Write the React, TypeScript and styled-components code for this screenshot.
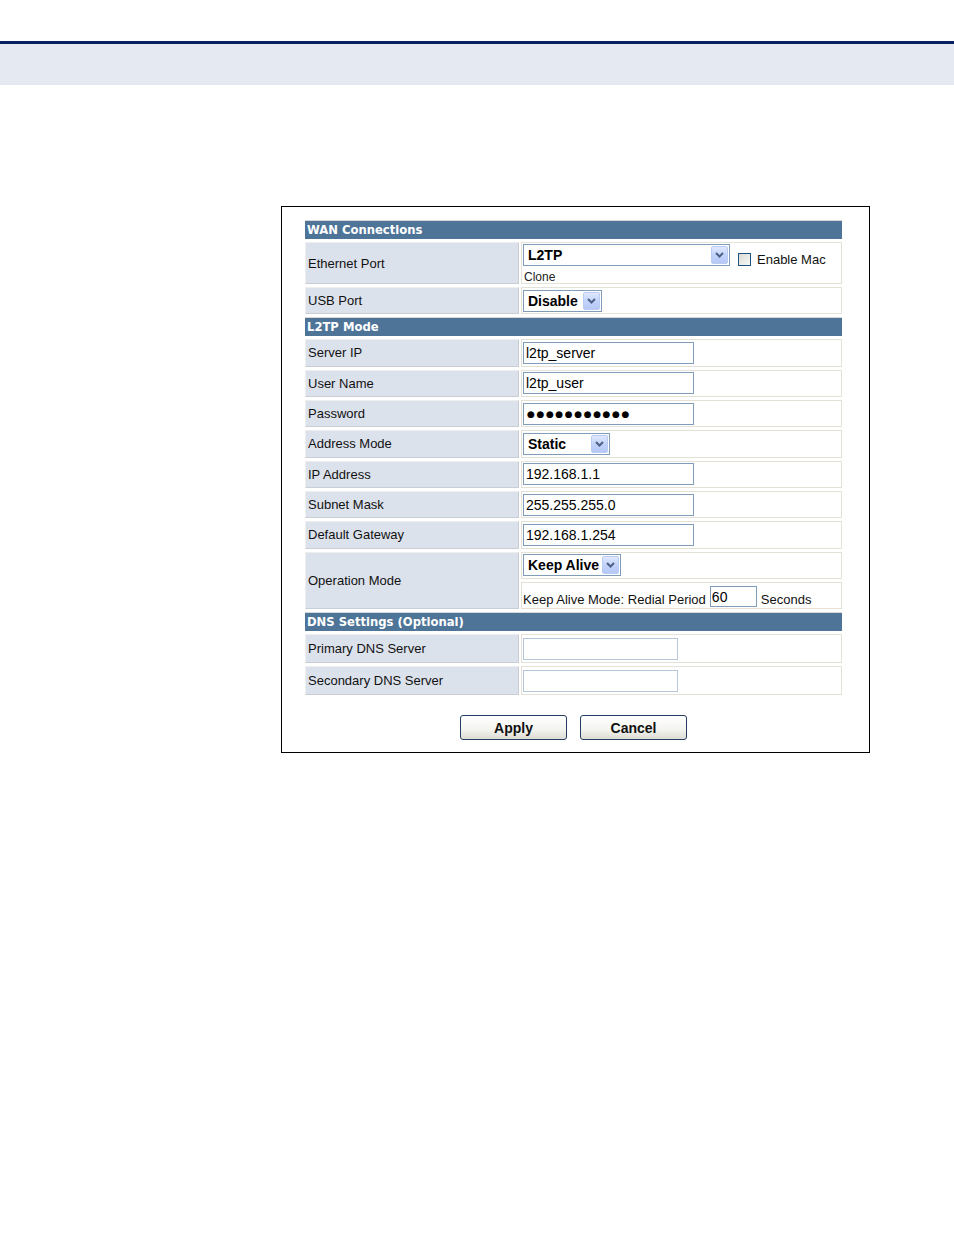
import React from "react";
import styled, { createGlobalStyle } from "styled-components";

const Global = createGlobalStyle`
  html, body { margin: 0; padding: 0; background: #fff; }
  body { font-family: "Liberation Sans", Arial, sans-serif; color: #000; }
`;

const TopRule = styled.div`
  margin-top: 41px;
  height: 3px;
  background: #062060;
`;

const Banner = styled.div`
  height: 41px;
  background: #e5e9f1;
`;

const Frame = styled.div`
  margin: 121px 0 0 281px;
  width: 564px;
  height: 532px;
  border: 1px solid #000;
  padding: 13px 0 0 23px;
  box-sizing: content-box;
`;

const Grid = styled.div`
  width: 537px;
  display: grid;
  grid-template-columns: 214px 321px;
  column-gap: 2px;
  row-gap: 3px;
`;

const Section = styled.div`
  grid-column: 1 / -1;
  height: 19px;
  background: #4e7498;
  color: #fff;
  font-family: "DejaVu Sans", Verdana, sans-serif;
  font-weight: bold;
  font-size: 11.6px;
  line-height: 18px;
  padding-left: 2px;
  border-top: 1px solid #d8d8d8;
  box-sizing: border-box;
`;

const Label = styled.div<{ $h?: number }>`
  height: ${(p) => p.$h ?? 27.33}px;
  background: #dce2ec;
  border: 1px solid #eeeeee;
  border-right-color: #c9cdd4;
  border-bottom-color: #c9cdd4;
  box-sizing: border-box;
  display: flex;
  align-items: center;
  padding-left: 2px;
  font-size: 13px;
  color: #111;
`;

const Value = styled.div<{ $h?: number; $top?: boolean }>`
  height: ${(p) => p.$h ?? 27.33}px;
  background: #fff;
  border: 1px solid #e4e2d6;
  box-sizing: border-box;
  display: flex;
  align-items: ${(p) => (p.$top ? "flex-start" : "center")};
  padding-left: 1px;
  font-size: 13px;
  color: #111;
`;

const OpStack = styled.div`
  display: flex;
  flex-direction: column;
  gap: 3px;
`;

const EthCol = styled.div`
  display: flex;
  flex-direction: column;
  padding-top: 1px;
`;

const EthTop = styled.div`
  display: flex;
  align-items: flex-start;
`;

const Small = styled.span`
  font-size: 12px;
  color: #222;
  line-height: 16px;
  padding: 2px 0 0 1px;
`;

const TextInput = styled.input<{ $w: number; $light?: boolean }>`
  width: ${(p) => p.$w}px;
  height: 22px;
  box-sizing: border-box;
  border: 1px solid ${(p) => (p.$light ? "#b7c6d8" : "#7f9db9")};
  padding: 0 2px;
  margin: 0;
  font-family: "Liberation Sans", Arial, sans-serif;
  font-size: 14px;
  color: #000;
  background: #fff;
  outline: none;
`;

const DotsInput = styled(TextInput)`
  font-family: "DejaVu Sans", sans-serif;
  font-size: 9px;
  letter-spacing: 1.6px;
  padding-left: 3px;
`;

const Select = styled.div<{ $w: number }>`
  width: ${(p) => p.$w}px;
  height: 22px;
  box-sizing: border-box;
  border: 1px solid #7f9db9;
  display: flex;
  align-items: center;
  justify-content: space-between;
  padding: 1px 1px 1px 4px;
  font-family: "Liberation Sans", Arial, sans-serif;
  font-weight: bold;
  font-size: 14px;
  color: #000;
  background: #fff;
`;

const DropBtn = styled.div`
  width: 17px;
  height: 18px;
  box-sizing: border-box;
  border: 1px solid #b9cbf3;
  border-radius: 2px;
  background: linear-gradient(180deg, #dfe8fd 0%, #c2d3fa 50%, #b5c9f7 100%);
  display: flex;
  align-items: center;
  justify-content: center;
`;

const CheckWrap = styled.label`
  display: flex;
  align-items: center;
  margin: 8px 0 0 8px;
  font-size: 13px;
  color: #111;
`;

const Box = styled.span`
  width: 11px;
  height: 11px;
  border: 1px solid #1c5180;
  background: linear-gradient(135deg, #dcdcd6 0%, #f7f7f5 100%);
  margin-right: 6px;
`;

const Inline = styled.div`
  display: flex;
  align-items: flex-end;
  height: 100%;
  padding-bottom: 1px;
  box-sizing: border-box;
`;

const Period = styled.input`
  width: 47px;
  height: 21px;
  box-sizing: border-box;
  border: 1px solid #7f9db9;
  padding: 0 1px;
  margin: 0 4px 0 4px;
  font-family: "Liberation Sans", Arial, sans-serif;
  font-size: 14px;
  line-height: 14px;
  outline: none;
`;

const Buttons = styled.div`
  width: 537px;
  display: flex;
  justify-content: center;
  gap: 13px;
  margin-top: 20px;
`;

const Btn = styled.button`
  width: 107px;
  height: 25px;
  border: 1px solid #243f63;
  border-radius: 3px;
  background: linear-gradient(180deg, #ffffff 0%, #f3f3ef 60%, #dcdcd4 100%);
  font-family: "Liberation Sans", Arial, sans-serif;
  font-weight: bold;
  font-size: 14px;
  color: #111;
  padding: 0;
`;

const Chevron = () => (
  <svg width="9" height="6" viewBox="0 0 9 6">
    <path d="M1 1 L4.5 4.5 L8 1" fill="none" stroke="#4d6185" strokeWidth="2" />
  </svg>
);

const Drop = ({ text, w }: { text: string; w: number }) => (
  <Select $w={w}>
    <span>{text}</span>
    <DropBtn>
      <Chevron />
    </DropBtn>
  </Select>
);

const Field = ({ label, value }: { label: string; value: string }) => (
  <>
    <Label>{label}</Label>
    <Value>
      <TextInput $w={171} value={value} readOnly />
    </Value>
  </>
);

export default function App() {
  return (
    <>
      <Global />
      <TopRule />
      <Banner />
      <Frame>
        <Grid>
          <Section>WAN Connections</Section>
          <Label $h={42}>Ethernet Port</Label>
          <Value $h={42} $top>
            <EthCol>
              <EthTop>
                <Drop text="L2TP" w={207} />
                <CheckWrap>
                  <Box />
                  Enable Mac
                </CheckWrap>
              </EthTop>
              <Small>Clone</Small>
            </EthCol>
          </Value>
          <Label>USB Port</Label>
          <Value>
            <Drop text="Disable" w={79} />
          </Value>
          <Section>L2TP Mode</Section>
          <Field label="Server IP" value="l2tp_server" />
          <Field label="User Name" value="l2tp_user" />
          <Label>Password</Label>
          <Value>
            <DotsInput $w={171} value="●●●●●●●●●●●" readOnly />
          </Value>
          <Label>Address Mode</Label>
          <Value>
            <Drop text="Static" w={87} />
          </Value>
          <Field label="IP Address" value="192.168.1.1" />
          <Field label="Subnet Mask" value="255.255.255.0" />
          <Field label="Default Gateway" value="192.168.1.254" />
          <Label $h={57.66}>Operation Mode</Label>
          <OpStack>
            <Value>
              <Drop text="Keep Alive" w={98} />
            </Value>
            <Value>
              <Inline>
                Keep Alive Mode: Redial Period
                <Period value="60" readOnly />
                Seconds
              </Inline>
            </Value>
          </OpStack>
          <Section>DNS Settings (Optional)</Section>
          <Label $h={29}>Primary DNS Server</Label>
          <Value $h={29}>
            <TextInput $w={155} $light value="" readOnly />
          </Value>
          <Label $h={29}>Secondary DNS Server</Label>
          <Value $h={29}>
            <TextInput $w={155} $light value="" readOnly />
          </Value>
        </Grid>
        <Buttons>
          <Btn>Apply</Btn>
          <Btn>Cancel</Btn>
        </Buttons>
      </Frame>
    </>
  );
}
